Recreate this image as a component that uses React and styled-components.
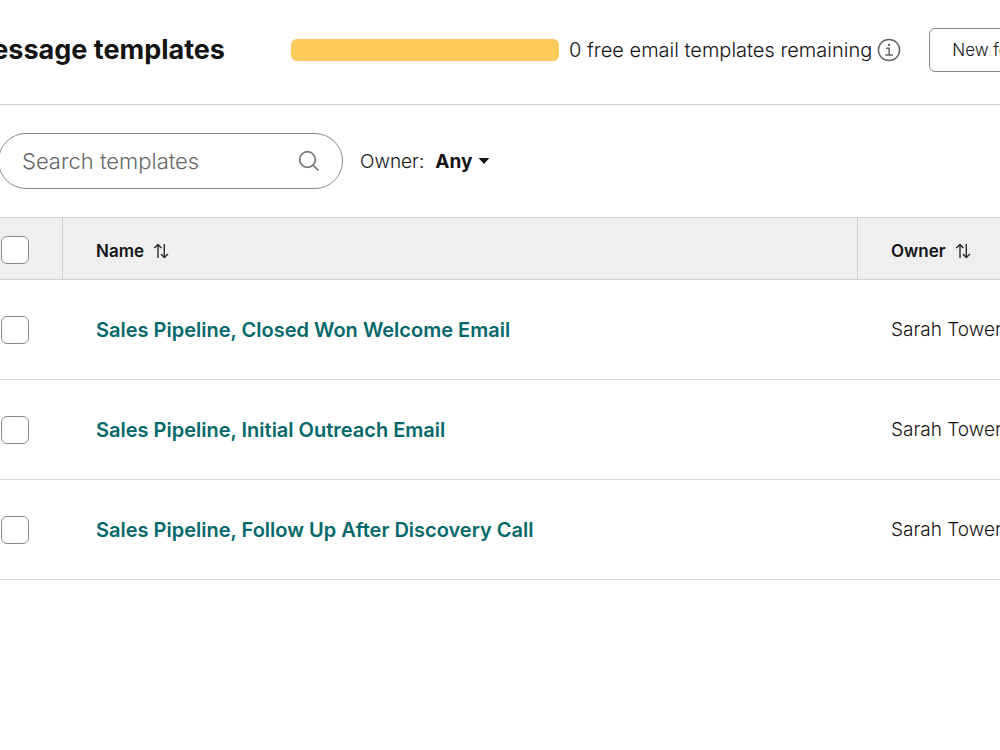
import React, { useState } from "react";
import styled, { createGlobalStyle } from "styled-components";

const templates = [
  { id: 1, name: "Sales Pipeline, Closed Won Welcome Email", owner: "Sarah Tower" },
  { id: 2, name: "Sales Pipeline, Initial Outreach Email", owner: "Sarah Tower" },
  { id: 3, name: "Sales Pipeline, Follow Up After Discovery Call", owner: "Sarah Tower" },
];

const SortIcon = () => (
  <svg width="16" height="16" viewBox="0 0 16 16" fill="none" stroke="#2b2b2b" strokeWidth="1.4" aria-hidden="true">
    <path d="M5 15V1.6M1.2 5 5 1.4 8.4 5" />
    <path d="M11.3 1v13.4M8 11l3.3 3.6L15 11" />
  </svg>
);

const SearchIcon = () => (
  <svg width="22" height="22" viewBox="0 0 22 22" fill="none" stroke="#757575" strokeWidth="1.7" aria-hidden="true">
    <circle cx="9.5" cy="9.5" r="7.8" />
    <path d="M15 15 20.5 20.5" />
  </svg>
);

const InfoIcon = () => (
  <svg width="24" height="24" viewBox="0 0 24 24" fill="none" stroke="#666" strokeWidth="1.5" aria-hidden="true">
    <circle cx="12" cy="12" r="10.6" />
    <path d="M9 10.2h3.2v6.6M8.3 17h7.6" />
    <circle cx="12" cy="6.9" r="1.2" fill="#666" stroke="none" />
  </svg>
);

const CaretIcon = () => (
  <svg width="12" height="6" viewBox="0 0 12 6" aria-hidden="true">
    <path d="M0.5 0h10.8L6 6z" fill="#141414" />
  </svg>
);

export default function App() {
  const [search, setSearch] = useState("");
  const [selected, setSelected] = useState([]);

  const toggle = (id) =>
    setSelected(selected.includes(id) ? selected.filter((s) => s !== id) : [...selected, id]);

  const toggleAll = () =>
    setSelected(selected.length === templates.length ? [] : templates.map((t) => t.id));

  const rows = templates.filter((t) => t.name.toLowerCase().includes(search.toLowerCase()));

  return (
    <Page>
      <GlobalStyle />
      <Header>
        <TitleBox>
          <Title>Message templates</Title>
        </TitleBox>
        <Usage>
          <UsageBar />
          <UsageText>0 free email templates remaining</UsageText>
          <IconButton type="button" aria-label="About the template limit">
            <InfoIcon />
          </IconButton>
        </Usage>
        <OutlineButton type="button">New folder</OutlineButton>
      </Header>

      <Toolbar>
        <SearchBox>
          <SearchInput
            type="text"
            aria-label="Search templates"
            placeholder="Search templates"
            value={search}
            onChange={(e) => setSearch(e.target.value)}
          />
          <SearchIcon />
        </SearchBox>
        <Filter>
          <span>Owner:</span>
          <FilterButton type="button">
            Any
            <CaretIcon />
          </FilterButton>
        </Filter>
      </Toolbar>

      <Table>
        <colgroup>
          <CheckCol />
          <NameCol />
          <col />
        </colgroup>
        <thead>
          <tr>
            <HeadCell $check>
              <Checkbox
                type="checkbox"
                aria-label="Select all"
                checked={selected.length === templates.length}
                onChange={toggleAll}
              />
            </HeadCell>
            <HeadCell>
              <SortButton type="button">
                Name <SortIcon />
              </SortButton>
            </HeadCell>
            <HeadCell>
              <SortButton type="button">
                Owner <SortIcon />
              </SortButton>
            </HeadCell>
          </tr>
        </thead>
        <tbody>
          {rows.map((t) => (
            <tr key={t.id}>
              <Cell $check>
                <Checkbox
                  type="checkbox"
                  aria-label={t.name}
                  checked={selected.includes(t.id)}
                  onChange={() => toggle(t.id)}
                />
              </Cell>
              <Cell>
                <TemplateLink href="#">{t.name}</TemplateLink>
              </Cell>
              <Cell>{t.owner}</Cell>
            </tr>
          ))}
        </tbody>
      </Table>
    </Page>
  );
}

const GlobalStyle = createGlobalStyle`
  * {
    box-sizing: border-box;
  }
  body {
    margin: 0;
    background: #fff;
    color: #141414;
    font-family: Inter, "Liberation Sans", sans-serif;
    font-size: 19px;
    font-weight: 300;
  }
  button, input {
    font: inherit;
    color: inherit;
  }
`;

const Page = styled.main`
  overflow-x: hidden;
`;

const Header = styled.header`
  display: flex;
  align-items: center;
  padding: 28px 0 32px;
  border-bottom: 1px solid #d0d0d0;
`;

const TitleBox = styled.div`
  display: flex;
  flex: none;
  justify-content: flex-end;
  width: 225px;
  margin-right: 66px;
`;

const Title = styled.h1`
  margin: 0;
  font-size: 27px;
  font-weight: 700;
  line-height: 44px;
  white-space: nowrap;
`;

const Usage = styled.div`
  display: flex;
  flex: none;
  align-items: center;
  margin-right: 28px;
`;

const UsageBar = styled.div`
  width: 268px;
  height: 22px;
  margin-right: 10px;
  border-radius: 6px;
  background: #fcca59;
`;

const UsageText = styled.span`
  margin-right: 5px;
  font-size: 20px;
  white-space: nowrap;
`;

const IconButton = styled.button`
  display: flex;
  padding: 0;
  border: none;
  background: none;
  cursor: pointer;
`;

const OutlineButton = styled.button`
  flex: none;
  height: 44px;
  padding: 0 22px;
  border: 1px solid #8a8a8a;
  border-radius: 6px;
  background: #fff;
  font-size: 17px;
  cursor: pointer;
`;

const Toolbar = styled.div`
  display: flex;
  align-items: center;
  gap: 17px;
  padding: 28px 0;
`;

const SearchBox = styled.div`
  display: flex;
  align-items: center;
  width: 345px;
  height: 56px;
  margin-left: -2px;
  padding: 0 22px 0 23px;
  border: 1px solid #8a8a8a;
  border-radius: 28px;
`;

const SearchInput = styled.input`
  flex: 1;
  min-width: 0;
  padding: 0;
  border: none;
  outline: none;
  background: none;
  font-size: 22px;

  &::placeholder {
    color: #666;
    opacity: 1;
  }
`;

const Filter = styled.div`
  display: flex;
  align-items: center;
  gap: 11px;
`;

const FilterButton = styled.button`
  display: flex;
  align-items: center;
  gap: 6px;
  padding: 0;
  border: none;
  background: none;
  font-weight: 700;
  cursor: pointer;
`;

const Table = styled.table`
  width: 100%;
  table-layout: fixed;
  border-collapse: separate;
  border-spacing: 0;
`;

const CheckCol = styled.col`
  width: 63px;
`;

const NameCol = styled.col`
  width: 795px;
`;

const HeadCell = styled.th`
  height: 63px;
  padding: ${(p) => (p.$check ? "3px 0 0 1px" : "5px 0 0 33px")};
  border-top: 1px solid #d0d0d0;
  border-right: 1px solid #d0d0d0;
  border-bottom: 1px solid #d0d0d0;
  background: #efefef;
  text-align: left;

  &:last-child {
    border-right: none;
  }
`;

const SortButton = styled.button`
  display: flex;
  align-items: center;
  gap: 9px;
  padding: 0;
  border: none;
  background: none;
  font-size: 17px;
  font-weight: 600;
  cursor: pointer;
`;

const Cell = styled.td`
  height: 100px;
  padding: ${(p) => (p.$check ? "0 0 0 1px" : "0 0 0 33px")};
  border-bottom: 1px solid #d6d6d6;
  white-space: nowrap;
`;

const TemplateLink = styled.a`
  color: #05686b;
  font-size: 20px;
  font-weight: 600;
  text-decoration: none;
`;

const Checkbox = styled.input`
  display: block;
  appearance: none;
  width: 28px;
  height: 28px;
  margin: 0;
  border: 1px solid #8a8a8a;
  border-radius: 6px;
  background: #fff;
  cursor: pointer;

  &:checked {
    background: #05686b;
  }
`;
